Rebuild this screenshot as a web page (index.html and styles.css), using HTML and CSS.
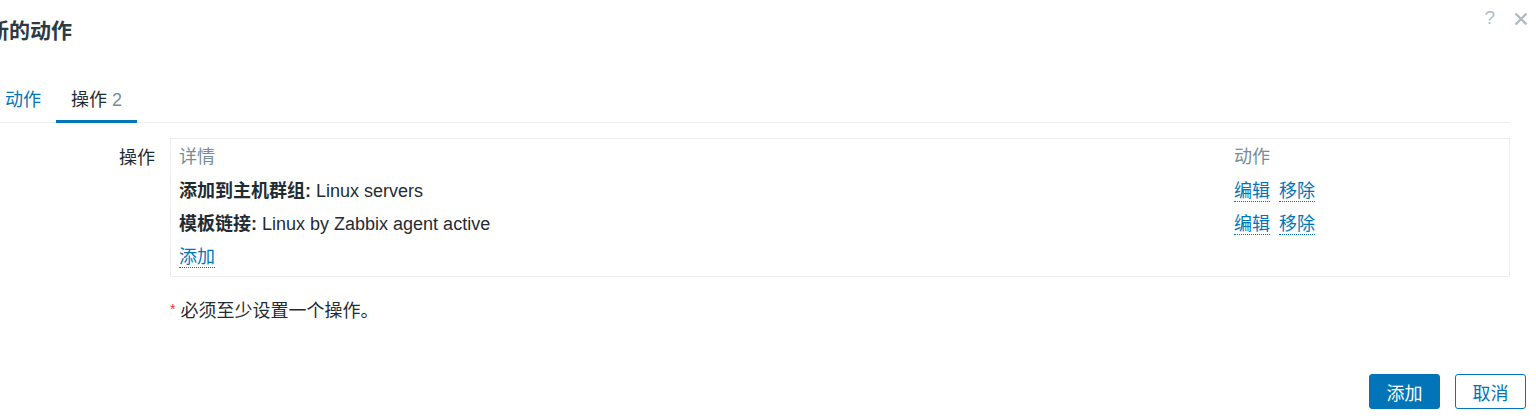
FILE: index.html
```html
<!DOCTYPE html>
<html lang="zh-CN">
<head>
  <meta charset="utf-8">
  <title>新的动作</title>
  <link rel="stylesheet" href="styles.css">
</head>
<body>
  <div class="dialog">
    <header class="dlg-head">
      <h4>新的动作</h4>
      <div class="head-btns">
        <span class="help">?</span>
        <svg class="close" width="14" height="14" viewBox="0 0 14 14">
          <path d="M1.5 1.5 L12.5 12.5 M12.5 1.5 L1.5 12.5" stroke="#aebcc4" stroke-width="2.4" fill="none"/>
        </svg>
      </div>
    </header>

    <div class="dlg-body">
      <ul class="tabs">
        <li><a class="tab-link">动作</a></li>
        <li class="active"><a class="tab-link">操作 <span class="count">2</span></a></li>
      </ul>

      <div class="form-list">
        <label class="form-label">操作</label>
        <div class="ops-box">
          <div class="ops-row ops-head">
            <span>详情</span>
            <span>动作</span>
          </div>
          <div class="ops-row">
            <span><b>添加到主机群组:</b> Linux servers</span>
            <span class="acts"><a class="link">编辑</a><a class="link">移除</a></span>
          </div>
          <div class="ops-row">
            <span><b>模板链接:</b> Linux by Zabbix agent active</span>
            <span class="acts"><a class="link">编辑</a><a class="link">移除</a></span>
          </div>
          <div class="ops-row">
            <span><a class="link">添加</a></span>
            <span></span>
          </div>
        </div>

        <span></span>
        <p class="req"><span class="star">*</span> 必须至少设置一个操作。</p>
      </div>
    </div>

    <footer class="dlg-foot">
      <button class="btn btn-main">添加</button>
      <button class="btn btn-alt">取消</button>
    </footer>
  </div>
</body>
</html>
```

FILE: styles.css
```css
html,
body {
  margin: 0;
  padding: 0;
  background: #fff;
  overflow: hidden;
}
body {
  font-family: "Liberation Sans", "Noto Sans CJK SC", sans-serif;
  font-size: 18px;
  color: #1f2c33;
}
.dialog {
  margin-left: -25px;
  width: 1561px;
  padding: 0 10px 0 15px;
  box-sizing: border-box;
}
.dlg-head {
  display: flex;
  justify-content: space-between;
  align-items: flex-start;
}
.dlg-head h4 {
  margin: 16px 0 0 -2px;
  font-size: 21px;
  line-height: 30px;
  font-weight: bold;
  color: #2b3a44;
}
.head-btns {
  display: flex;
  align-items: center;
  gap: 19px;
  margin-top: 9px;
  margin-right: -2px;
}
.help {
  font-size: 19px;
  line-height: 18px;
  color: #aebcc4;
}
.close {
  display: block;
  margin-top: 1px;
}
.dlg-body {
  padding-right: 16px;
}
.tabs {
  list-style: none;
  margin: 42px 0 0;
  padding: 0;
  display: flex;
  border-bottom: 1px solid #ebeef0;
}
.tabs li {
  padding: 0 15px 8px;
  line-height: 24px;
  border-bottom: 3px solid transparent;
  margin-bottom: -1px;
}
.tab-link {
  color: #0275b8;
}
.tabs li.active {
  border-bottom-color: #0275b8;
}
.tabs li.active .tab-link {
  color: #1f2c33;
}
.count {
  color: #768d99;
}
.form-list {
  display: grid;
  grid-template-columns: 165px 1fr;
  column-gap: 15px;
  margin-top: 15px;
}
.form-label {
  text-align: right;
  padding-top: 10px;
  line-height: 20px;
}
.ops-box {
  border: 1px solid #ebeef0;
  padding: 1px 0 3px;
}
.ops-row {
  display: grid;
  grid-template-columns: 1fr 283px;
  height: 33px;
  line-height: 20px;
}
.ops-row > span {
  padding: 7px 8px 6px;
}
.ops-head {
  height: 34px;
  color: #768d99;
}
.ops-row b {
  font-weight: bold;
}
.link {
  color: #0275b8;
  border-bottom: 1px dotted #0275b8;
  cursor: pointer;
}
.acts .link {
  margin-right: 9px;
}
.req {
  margin: 22px 0 0;
  line-height: 20px;
}
.star {
  color: #e33734;
  font-size: 14px;
  vertical-align: 3px;
}
.dlg-foot {
  display: flex;
  justify-content: flex-end;
  gap: 15px;
  margin-top: 53px;
}
.btn {
  width: 71px;
  height: 35px;
  border-radius: 3px;
  font-family: inherit;
  font-size: 18px;
  padding: 0;
  cursor: pointer;
}
.btn-main {
  background: #0275b8;
  border: 1px solid #0275b8;
  color: #fff;
}
.btn-alt {
  background: #fff;
  border: 1px solid #0275b8;
  color: #0275b8;
}
```
